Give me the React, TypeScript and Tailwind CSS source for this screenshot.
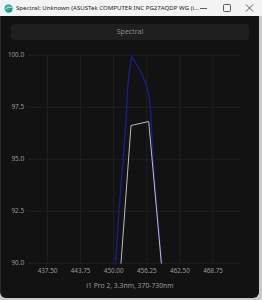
import React from "react";

const gx = [46.5, 79.6, 112.7, 145.8, 178.9, 212];
const xl = ["437.50", "443.75", "450.00", "456.25", "462.50", "468.75"];
const gy = [55.3, 107.3, 159.3, 211.3, 263.3];
const yl = ["100.0", "97.5", "95.0", "92.5", "90.0"];

export default function App() {
  return (
    <div className="w-[262px] h-[300px] bg-[#c9c9c9] overflow-hidden flex flex-col" style={{ fontFamily: '"Noto Sans", "Open Sans", sans-serif' }}>
      <div className="h-[16px] bg-[#f3f3f3] flex items-center shrink-0 w-[262px] overflow-hidden">
        <svg width="9" height="9" viewBox="0 0 10 10" className="ml-[4px] mr-[3px] shrink-0">
          <defs>
            <linearGradient id="ig" x1="0" y1="0" x2="1" y2="1">
              <stop offset="0" stopColor="#3fa9f5" />
              <stop offset="0.5" stopColor="#2bb673" />
              <stop offset="1" stopColor="#1c5fd1" />
            </linearGradient>
          </defs>
          <circle cx="5" cy="5" r="4.6" fill="url(#ig)" />
          <path d="M1.5 6 C3 3.5 6 3 8.8 4" stroke="#e8f4ff" strokeWidth="0.9" fill="none" />
        </svg>
        <span className="shrink-0 text-[6.1px] leading-none text-[#222] whitespace-nowrap">Spectral: Unknown (ASUSTek COMPUTER INC PG27AQDP WG (i...</span>
        <div className="flex-1" />
        <svg width="62" height="16" viewBox="0 0 62 16" className="shrink-0">
          <line x1="0" y1="8.5" x2="7" y2="8.5" stroke="#333" strokeWidth="0.8" />
          <rect x="23.5" y="4.5" width="7" height="7" rx="1" fill="none" stroke="#333" strokeWidth="0.8" />
          <path d="M46 4.5 L53 11.5 M53 4.5 L46 11.5" stroke="#333" strokeWidth="0.8" />
        </svg>
      </div>
      <div className="w-[259px] h-[282px] flex flex-col bg-[#121212] rounded-b-[6px] overflow-hidden border-l border-[#2a2a2a]">
        <div className="mx-[10px] mt-[8px] h-[16px] rounded-[4px] bg-[#1f1f1f] flex items-center justify-center text-[7px] text-[#8a8a8a] shrink-0">
          Spectral
        </div>
        <svg width="258" height="236" viewBox="0 40 258 236" className="shrink-0">
          <defs>
            <clipPath id="pc">
              <rect x="27" y="55" width="213" height="208.5" />
            </clipPath>
          </defs>
          {gy.map((y) => (
            <line key={y} x1="27" x2="240" y1={y} y2={y} stroke="#232323" strokeWidth="0.8" />
          ))}
          {gx.map((x) => (
            <line key={x} x1={x} x2={x} y1="55" y2="263.3" stroke="#232323" strokeWidth="0.8" />
          ))}
          {gy.map((y, i) => (
            <text key={y} x="23" y={y + 2} textAnchor="end" fontSize="6.3" fill="#9a9a9a">
              {yl[i]}
            </text>
          ))}
          {gx.map((x, i) => (
            <text key={x} x={x} y="273" textAnchor="middle" fontSize="6.3" fill="#9a9a9a">
              {xl[i]}
            </text>
          ))}
          <g clipPath="url(#pc)" fill="none" strokeLinejoin="round">
            <path
              d="M114.5 266 L118 210 L122.5 155 L125 120 L126.5 90 L128.5 70 L130.7 56.5 L134 62 L140 72 L145 84 L148 95 L149.6 110 L151 140 L152 160 L156 210 L161 266"
              stroke="#1c1c8e"
              strokeWidth="1.4"
            />
            <path d="M119.8 266 L130 125.5 L147.7 121.5 L160.6 266" stroke="#cfcfcf" strokeWidth="0.9" />
          </g>
        </svg>
        <div className="text-center text-[6.8px] text-[#9a9a9a] leading-none mt-[7px]">i1 Pro 2, 3.3nm, 370-730nm</div>
      </div>
    </div>
  );
}
